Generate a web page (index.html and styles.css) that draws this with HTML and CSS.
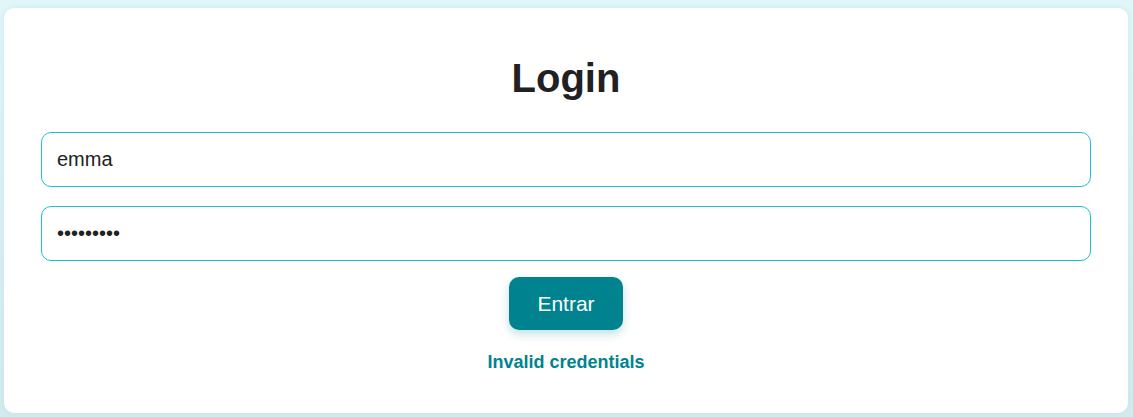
FILE: index.html
```html
<!DOCTYPE html>
<html lang="es">
<head>
<meta charset="utf-8">
<title>Login</title>
<link rel="stylesheet" href="styles.css">
</head>
<body>
<main class="page">
  <section class="card">
    <h1 class="title">Login</h1>
    <form class="form">
      <input class="field" type="text" value="emma">
      <input class="field" type="password" value="123456789">
      <button class="btn" type="button">Entrar</button>
      <p class="error">Invalid credentials</p>
    </form>
  </section>
</main>
</body>
</html>
```

FILE: styles.css
```css
html, body {
  margin: 0;
  height: 100%;
}
body {
  background: linear-gradient(180deg, #e0f6f8 0%, #d3ebee 100%);
  font-family: "Liberation Sans", Arial, sans-serif;
  color: #212121;
}
.page {
  box-sizing: border-box;
  height: 417px;
  padding: 8px 5px 4px 4px;
  display: flex;
}
.card {
  flex: 1;
  background: #fff;
  border-radius: 10px;
  padding: 0 37px;
  display: flex;
  flex-direction: column;
  box-shadow: 0 0 6px rgba(0, 96, 110, 0.08);
}
.title {
  margin: 48px 0 0;
  text-align: center;
  font-size: 40px;
  line-height: 44px;
  font-weight: 700;
  color: #212121;
}
.form {
  margin-top: 32px;
  display: flex;
  flex-direction: column;
  align-items: center;
}
.field {
  box-sizing: border-box;
  width: 100%;
  height: 55px;
  margin-bottom: 19px;
  padding: 0 15px;
  border: 1px solid #1ec0d6;
  border-radius: 10px;
  font-family: "Liberation Sans", Arial, sans-serif;
  font-size: 20px;
  color: #212121;
  background: #fff;
  outline: none;
}
.field:last-of-type {
  margin-bottom: 16px;
}
.btn {
  width: 114px;
  height: 53px;
  border: none;
  border-radius: 10px;
  background: #00838f;
  color: #fff;
  font-family: "Liberation Sans", Arial, sans-serif;
  font-size: 21px;
  box-shadow: 0 4px 10px rgba(0, 131, 143, 0.25);
  cursor: pointer;
}
.error {
  margin: 22px 0 0;
  font-size: 18px;
  font-weight: 700;
  color: #00838f;
}
```
